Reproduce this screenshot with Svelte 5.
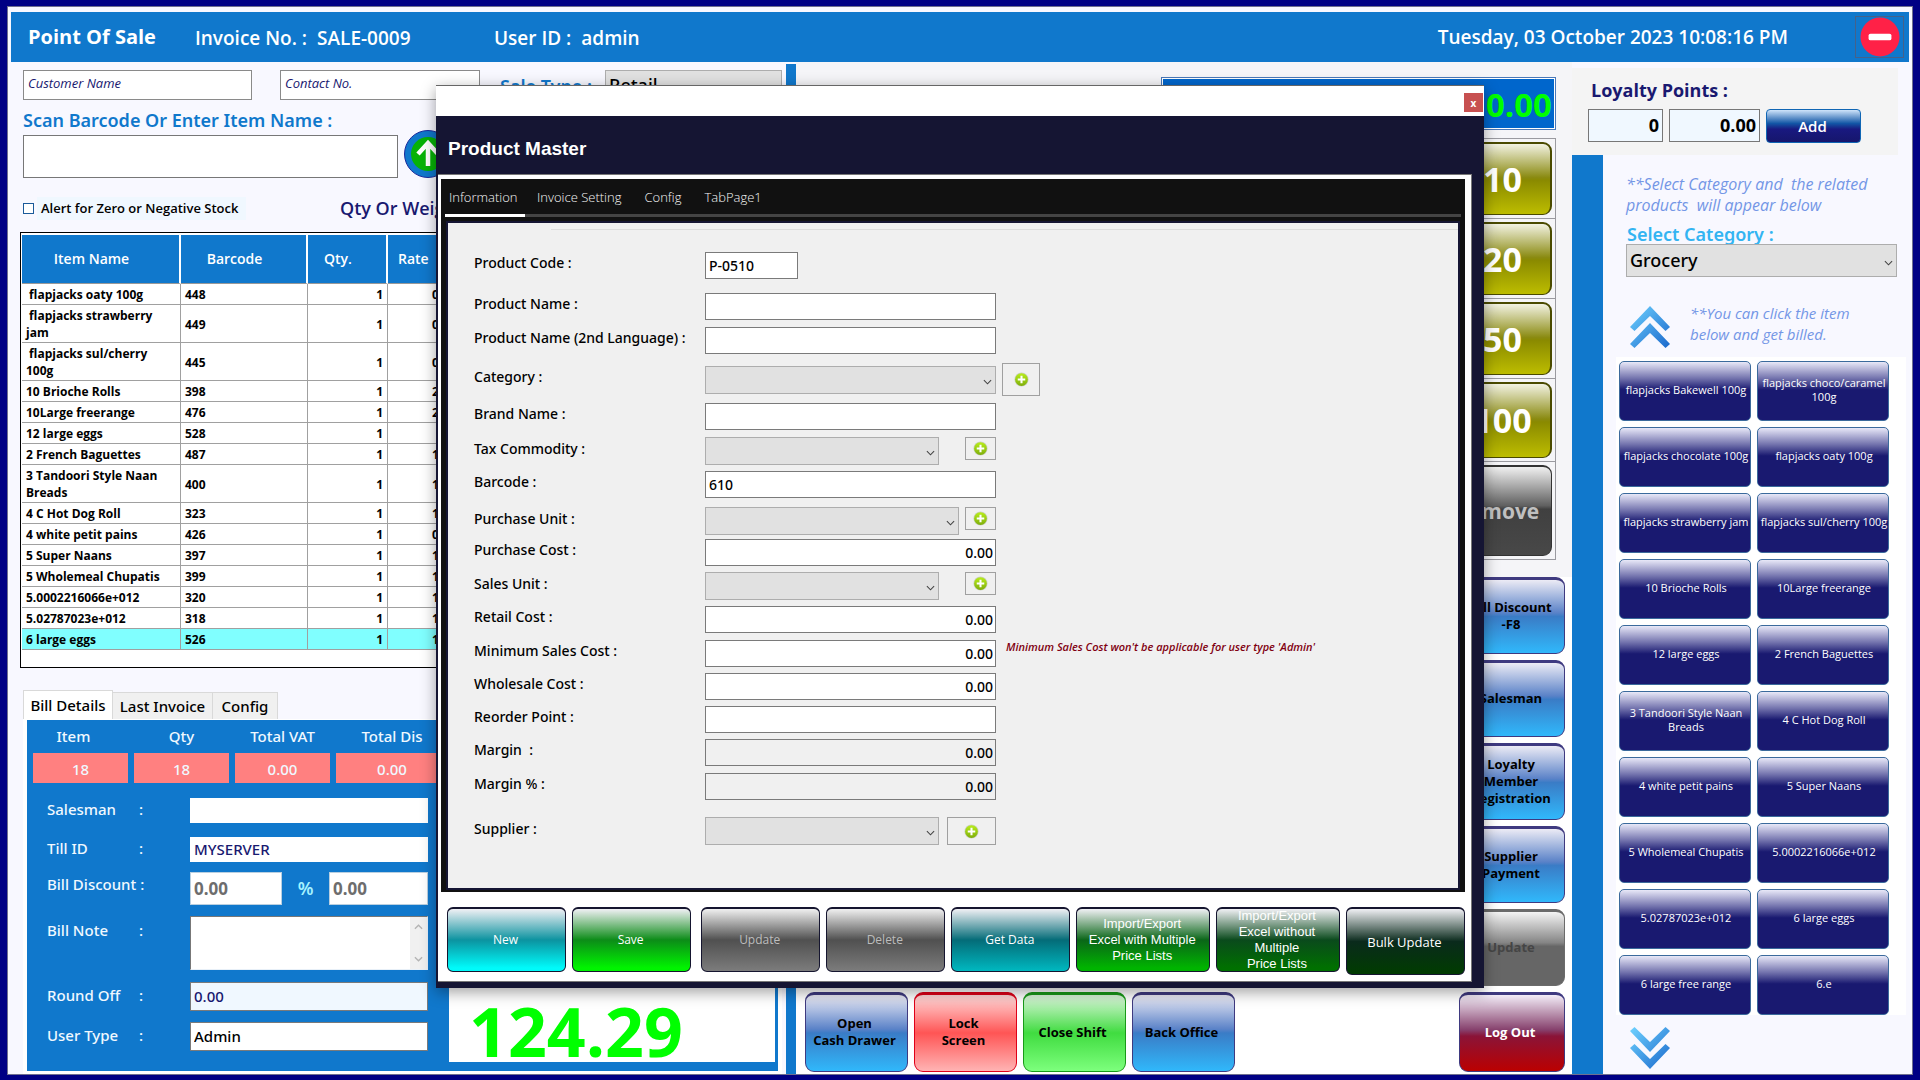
<script>
  const cart = [
    ['\u00a0flapjacks oaty 100g', '448', '1', '0.65'],
    ['\u00a0flapjacks strawberry jam', '449', '1', '0.65'],
    ['\u00a0flapjacks sul/cherry 100g', '445', '1', '0.65'],
    ['10 Brioche Rolls', '398', '1', '2.00'],
    ['10Large freerange', '476', '1', '2.00'],
    ['12 large eggs', '528', '1', ''],
    ['2 French Baguettes', '487', '1', '1.00'],
    ['3 Tandoori Style Naan Breads', '400', '1', '1.00'],
    ['4 C Hot Dog Roll', '323', '1', '1.00'],
    ['4 white petit pains', '426', '1', '0.99'],
    ['5 Super Naans', '397', '1', '1.00'],
    ['5 Wholemeal Chupatis', '399', '1', '1.00'],
    ['5.0002216066e+012', '320', '1', '1.00'],
    ['5.02787023e+012', '318', '1', '1.00'],
    ['6 large eggs', '526', '1', '1.00']
  ];

  const products = [
    'flapjacks Bakewell 100g', 'flapjacks choco/caramel 100g',
    'flapjacks chocolate 100g', 'flapjacks oaty 100g',
    'flapjacks strawberry jam', 'flapjacks sul/cherry 100g',
    '10 Brioche Rolls', '10Large freerange',
    '12 large eggs', '2 French Baguettes',
    '3 Tandoori Style Naan Breads', '4 C Hot Dog Roll',
    '4 white petit pains', '5 Super Naans',
    '5 Wholemeal Chupatis', '5.0002216066e+012',
    '5.02787023e+012', '6 large eggs',
    '6 large free range', '6.e'
  ];

  const totals = [['Item', '18'], ['Qty', '18'], ['Total VAT', '0.00'], ['Total Dis', '0.00']];

  const fields = [
    { id: 'code', label: 'Product Code :', value: 'P-0510', size: 'short' },
    { id: 'name', label: 'Product Name :', value: '', gap: 'group' },
    { id: 'name2', label: 'Product Name (2nd Language) :', value: '' },
    { id: 'category', label: 'Category :', select: 'full', gap: 'loose', outer: true },
    { id: 'brand', label: 'Brand Name :', value: '' },
    { id: 'tax', label: 'Tax Commodity :', select: 'narrow', add: 'small' },
    { id: 'barcode', label: 'Barcode :', value: '610', gap: 'snug' },
    { id: 'punit', label: 'Purchase Unit :', select: 'medium', add: 'small', gap: 'loose' },
    { id: 'pcost', label: 'Purchase Cost :', value: '0.00', num: true, gap: 'tight' },
    { id: 'sunit', label: 'Sales Unit :', select: 'narrow', add: 'small', gap: 'snug' },
    { id: 'retail', label: 'Retail Cost :', value: '0.00', num: true, gap: 'snug' },
    { id: 'minimum', label: 'Minimum Sales Cost :', value: '0.00', num: true, note: "Minimum Sales Cost won't be applicable for user type 'Admin'" },
    { id: 'wholesale', label: 'Wholesale Cost :', value: '0.00', num: true, gap: 'snug' },
    { id: 'reorder', label: 'Reorder Point :', value: '', gap: 'snug' },
    { id: 'margin', label: 'Margin \u00a0:', value: '0.00', num: true, locked: true, gap: 'snug' },
    { id: 'marginpct', label: 'Margin % :', value: '0.00', num: true, locked: true },
    { id: 'supplier', label: 'Supplier :', select: 'narrow', add: 'wide', gap: 'far' }
  ];
</script>

{#snippet arrow()}
  <svg class="arrow" viewBox="0 0 10 6" aria-hidden="true"><path d="M1 1l4 4 4-4" fill="none" stroke="#444" stroke-width="1.2" /></svg>
{/snippet}

{#snippet plus()}
  <svg class="plus" viewBox="0 0 16 16" aria-hidden="true">
    <circle cx="8" cy="8" r="7.5" fill="#c9cfc0" />
    <circle cx="8" cy="8" r="6.8" fill="url(#lime)" />
    <path d="M8 4v8M4 8h8" stroke="#fff" stroke-width="2.2" />
  </svg>
{/snippet}

<svg class="defs" aria-hidden="true">
  <defs>
    <linearGradient id="lime" x1="0" y1="0" x2="0" y2="1">
      <stop offset="0" stop-color="#b9ee1a" />
      <stop offset="1" stop-color="#7fae0c" />
    </linearGradient>
    <linearGradient id="sky" x1="0" y1="0" x2="1" y2="1">
      <stop offset="0" stop-color="#6fd2ff" />
      <stop offset="1" stop-color="#1a68cc" />
    </linearGradient>
  </defs>
</svg>

<div class="screen">
  <div class="shell">
    <header class="top">
      <h1>Point Of Sale</h1>
      <div class="pair invoice"><span>Invoice No. :</span><span>SALE-0009</span></div>
      <div class="pair"><span>User ID :</span><span>admin</span></div>
      <time>Tuesday, 03 October 2023 10:08:16 PM</time>
      <button class="exit" aria-label="Minimize">
        <svg viewBox="0 0 42 42"><circle cx="21" cy="21" r="20.5" fill="#ff2147" /><rect x="9" y="17.500" width="24" height="7" rx="2" fill="#fff" /></svg>
      </button>
    </header>

    <div class="work">
      <section class="sale">
        <div class="customer">
          <input class="cust" aria-label="Customer Name" placeholder="Customer Name" />
          <input class="contact" aria-label="Contact No." placeholder="Contact No." />
          <label class="blue" for="saletype">Sale Type :</label>
          <span class="pick saletype"><select id="saletype"><option>Retail</option></select>{@render arrow()}</span>
        </div>
        <label class="blue scanlabel" for="scan">Scan Barcode Or Enter Item Name :</label>
        <div class="scan">
          <input id="scan" />
          <button class="go" aria-label="Add item">
            <svg viewBox="0 0 48 48"><circle cx="24" cy="24" r="23.5" fill="#1078cc" stroke="#1b2a9c" /><circle cx="24" cy="24" r="17" fill="#06b206" /><path d="M24 36V14M14 24l10-11 10 11" fill="none" stroke="#fff" stroke-width="4.500" /></svg>
          </button>
        </div>
        <div class="alert">
          <input type="checkbox" id="zero" /><label for="zero">Alert for Zero or Negative Stock</label>
          <span class="weight">Qty Or Weight</span>
        </div>

        <div class="cart">
          <table>
            <colgroup><col class="c-name" /><col class="c-code" /><col class="c-qty" /><col class="c-rate" /><col /></colgroup>
            <thead><tr><th>Item Name</th><th>Barcode</th><th>Qty.</th><th class="lead">Rate</th><th></th></tr></thead>
            <tbody>
              {#each cart as row, i}
                <tr class:picked={i === cart.length - 1}>
                  <td>{row[0]}</td><td>{row[1]}</td><td class="num">{row[2]}</td><td class="num">{row[3]}</td><td></td>
                </tr>
              {/each}
            </tbody>
          </table>
        </div>

        <div class="billtabs" role="tablist">
          <button role="tab" class="on" aria-selected="true">Bill Details</button>
          <button role="tab" aria-selected="false">Last Invoice</button>
          <button role="tab" aria-selected="false">Config</button>
        </div>
        <div class="billframe">
          <div class="bill">
            <div class="totals">
              {#each totals as t}
                <div class="total"><span>{t[0]}</span><output>{t[1]}</output></div>
              {/each}
            </div>
            <div class="billbody">
              <div class="billform">
                <div class="brow"><label for="sman"><span>Salesman</span><span>:</span></label><input id="sman" class="plain" /></div>
                <div class="brow"><label for="till"><span>Till ID</span><span>:</span></label><input id="till" class="plain navy" value="MYSERVER" /></div>
                <div class="brow disc"><label for="bdisc"><span>Bill Discount :</span></label>
                  <div class="split"><input id="bdisc" class="grey" value="0.00" /><span class="pct">%</span><input class="grey" aria-label="Discount amount" value="0.00" /></div>
                </div>
                <div class="brow note"><label for="bnote"><span>Bill Note</span><span>:</span></label>
                  <div class="memo">
                    <textarea id="bnote"></textarea>
                    <div class="bar"><svg viewBox="0 0 10 6"><path d="M1 5l4-4 4 4" /></svg><svg viewBox="0 0 10 6"><path d="M1 1l4 4 4-4" /></svg></div>
                  </div>
                </div>
                <div class="brow"><label for="round"><span>Round Off</span><span>:</span></label><input id="round" class="boxed pale navy" value="0.00" /></div>
                <div class="brow"><label for="utype"><span>User Type</span><span>:</span></label><input id="utype" class="boxed" value="Admin" /></div>
              </div>
              <output class="grand">124.29</output>
            </div>
          </div>
        </div>
      </section>

      <div class="divider"></div>

      <section class="pay">
        <div class="payside">
          <output class="amount">0.00</output>
          <div class="notes">
            <div><button class="olive">10</button></div>
            <div><button class="olive">20</button></div>
            <div><button class="olive">50</button></div>
            <div><button class="olive">100</button></div>
            <div class="tall"><button class="remove">Remove</button></div>
          </div>
          <div class="actions">
            <button class="gloss azure">Bill Discount<br />-F8</button>
            <button class="gloss azure">Salesman</button>
            <button class="gloss azure">Loyalty<br />Member<br />Registration</button>
            <button class="gloss azure">Supplier<br />Payment</button>
            <button class="gloss off">Update</button>
          </div>
        </div>
        <div class="bottom">
          <button class="gloss azure">Open<br />Cash Drawer</button>
          <button class="gloss red">Lock<br />Screen</button>
          <button class="gloss green">Close Shift</button>
          <button class="gloss azure">Back Office</button>
          <button class="gloss wine">Log Out</button>
        </div>
      </section>

      <section class="right">
        <div class="loyalty">
          <label for="points">Loyalty Points :</label>
          <div class="lrow">
            <input id="points" class="p1" value="0" />
            <input class="p2" aria-label="Points value" value="0.00" />
            <button>Add</button>
          </div>
        </div>
        <div class="lower">
          <div class="rail"></div>
          <div class="catalog">
            <p class="hint lead">**Select Category and&nbsp; the related<br />products&nbsp; will appear below</p>
            <label class="catlabel" for="cat">Select Category :</label>
            <span class="pick cat"><select id="cat"><option>Grocery</option></select>{@render arrow()}</span>
            <div class="more">
              <button class="chev" aria-label="Scroll up"><svg viewBox="0 0 40 42"><path fill="url(#sky)" d="M20 0L40 21L35.500 25L20 10L4.500 25L0 21ZM20 17L40 38L35.500 42L20 27L4.500 42L0 38Z" /></svg></button>
              <p class="hint">**You can click the item<br />below and get billed.</p>
            </div>
            <div class="items">
              {#each products as p}<button>{p}</button>{/each}
            </div>
            <button class="chev down" aria-label="Scroll down"><svg viewBox="0 0 40 42"><path fill="url(#sky)" d="M20 25L40 4L35.500 0L20 15L4.500 0L0 4ZM20 42L40 21L35.500 17L20 32L4.500 17L0 21Z" /></svg></button>
          </div>
        </div>
      </section>
    </div>
  </div>

  <div class="dialog" role="dialog" aria-label="Product Master">
    <div class="caption"><button aria-label="Close">x</button></div>
    <h2>Product Master</h2>
    <div class="inner">
      <div class="tabs">
        <div class="strip" role="tablist">
          <button role="tab" class="on" aria-selected="true">Information</button>
          <button role="tab" aria-selected="false">Invoice Setting</button>
          <button role="tab" aria-selected="false">Config</button>
          <button role="tab" aria-selected="false">TabPage1</button>
        </div>
        <form class="panel" onsubmit={(e) => e.preventDefault()}>
          <hr />
          {#each fields as f}
            <div class="row {f.gap ?? ''}">
              <label for={f.id}>{f.label}</label>
              <div class="field">
                {#if f.select}
                  <span class="pick {f.select}"><select id={f.id}><option></option></select>{@render arrow()}</span>
                {:else}
                  <input id={f.id} class={f.size ?? ''} class:num={f.num} readonly={f.locked} value={f.value} />
                {/if}
                {#if f.add}<button type="button" class="add {f.add}" aria-label="Add">{@render plus()}</button>{/if}
              </div>
              {#if f.outer}<button type="button" class="add big" aria-label="Add category">{@render plus()}</button>{/if}
              {#if f.note}<em>{f.note}</em>{/if}
            </div>
          {/each}
        </form>
      </div>
      <div class="commands">
        <button class="cyan">New</button>
        <button class="lime">Save</button>
        <button class="dim first" disabled>Update</button>
        <button class="dim" disabled>Delete</button>
        <button class="teal">Get Data</button>
        <button class="forest sans wide">Import/Export<br />Excel with Multiple<br />Price Lists</button>
        <button class="deep sans">Import/Export<br />Excel without<br />Multiple<br />Price Lists</button>
        <button class="dark">Bulk Update</button>
      </div>
    </div>
  </div>
</div>

<style>
  :global(body) { margin: 0; background: #000084; }
  * { box-sizing: border-box; }
  .defs { position: absolute; width: 0; height: 0; }
  .screen { position: relative; min-height: 100vh; display: flex; flex-direction: column; padding: 6px 7px 5px; background: #000084; font: 14px/1.2 "Open Sans", "Noto Sans", sans-serif; color: #000; }
  .shell { flex: 1; display: flex; flex-direction: column; border: 1px solid #6f6f8f; background: #f8f8ff; padding: 5px 3px 0 3px; }
  button, input, select, textarea { font: inherit; color: inherit; margin: 0; }
  button { cursor: pointer; padding: 0; border: 0; background: none; }
  h1, h2, p { margin: 0; }

  .top { display: flex; align-items: center; height: 50px; background: #1078cc; color: #fff; font-size: 19px; font-weight: 600; padding: 0 5px 0 17px; }
  .top h1 { font-size: 20px; font-weight: 700; width: 167px; }
  .pair { display: flex; gap: 10px; padding-top: 2px; }
  .invoice { width: 299px; }
  .top time { margin-left: auto; }
  .exit { display: flex; justify-content: center; width: 49px; height: 42px; margin-left: 67px; border: 1px solid #45618a; }
  .exit svg { width: 40px; height: 40px; }

  .work { flex: 1; display: grid; grid-template-columns: minmax(0, 775fr) 10px minmax(0, 776fr) minmax(0, 337fr); }
  .divider { background: #1078cc; margin-top: 2px; }

  .sale { display: flex; flex-direction: column; padding-top: 8px; }
  .customer { display: flex; align-items: flex-start; padding-left: 12px; height: 38px; }
  .customer input { border: 1px solid #8a8a8a; background: #fff; height: 30px; padding: 0 4px 4px; font-size: 13px; font-style: italic; }
  .customer input::placeholder { color: #191970; opacity: 1; }
  .cust { width: 229px; }
  .contact { width: 200px; margin-left: 28px; }
  .blue { color: #1078cc; font-family: "Noto Sans", "Open Sans", sans-serif; font-size: 18px; font-weight: 600; line-height: 24px; }
  .customer .blue { margin: 4px 13px 0 20px; white-space: nowrap; width: 92px; }
  .scanlabel { padding-left: 12px; }
  .scan { display: flex; align-items: flex-end; gap: 6px; padding-left: 12px; height: 46px; }
  .scan input { width: 375px; height: 43px; border: 1px solid #777; background: #fff; }
  .go { display: flex; width: 48px; height: 48px; }
  .go svg { width: 48px; }
  .alert { display: flex; align-items: center; height: 54px; padding: 7px 0 0 12px; }
  .alert input { appearance: none; width: 11px; height: 11px; border: 1px solid #1b5a9a; background: #fff; }
  .alert label { font-size: 13px; font-weight: 600; padding: 4px 9px 3px 4px; margin-left: 3px; background: #f0f8ff; width: 209px; white-space: nowrap; }
  .weight { margin-left: 94px; font-size: 18px; font-weight: 600; color: #191970; }

  .pick { position: relative; display: block; }
  .pick select { appearance: none; display: block; width: 100%; height: 28px; border: 1px solid #adadad; border-radius: 0; background: #e1e1e1; padding: 0 3px; font-family: "Noto Sans", "Open Sans", sans-serif; }
  .arrow { position: absolute; right: 4px; top: 50%; margin-top: -1px; width: 9px; height: 6px; pointer-events: none; }
  .saletype { width: 177px; }
  .saletype select { height: 32px; font-size: 18px; font-weight: 500; }

  .cart { margin: 0 12px 0 9px; min-height: 436px; flex: 1; border: 1px solid #000; background: #fff; padding: 2px 0 0 1px; overflow: hidden; }
  table { width: 100%; border-collapse: separate; border-spacing: 0; table-layout: fixed; font-size: 12px; font-weight: 700; }
  .c-name { width: 159px; }
  .c-code { width: 127px; }
  .c-qty { width: 80px; }
  .c-rate { width: 73px; }
  th { height: 49px; background: #1078cc; color: #fff; font-size: 14px; font-weight: 600; padding: 0 18px 0 0; border-right: 2px solid #fff; }
  th.lead { text-align: left; padding-left: 10px; }
  thead th { border-bottom: 1px solid #999; }
  td { padding: 2px 4px 1px 4px; line-height: 17px; border-right: 1px solid #a0a0a0; border-bottom: 1px solid #a0a0a0; overflow: hidden; }
  td:first-child { padding-right: 8px; }
  .num { text-align: right; }
  .picked td { background: #80ffff; }

  .billtabs { display: flex; align-items: flex-end; margin-top: 22px; padding-left: 12px; font-family: "Noto Sans", "Open Sans", sans-serif; }
  .billtabs button { height: 27px; padding: 0 4px 0 4px; font-size: 15px; font-weight: 500; border: 1px solid #d9d9d9; border-bottom: 0; border-left: 0; background: #f0f0f0; width: 100px; white-space: nowrap; }
  .billtabs button:last-child { width: 65px; }
  .billtabs .on { height: 29px; width: 90px; padding: 0; background: #fff; border-left: 1px solid #d9d9d9; }
  .billframe { margin: 0 4px 0 12px; background: #fff; padding: 1px 4px 3px 4px; }
  .bill { background: #1078cc; color: #f0f8ff; padding: 7px 3px 9px 6px; font-family: "Noto Sans", "Open Sans", sans-serif; font-size: 15px; font-weight: 500; }
  .totals { display: flex; gap: 6px; }
  .total { width: 95px; text-align: center; display: flex; flex-direction: column; }
  .total:last-child { width: 112px; }
  .total span { height: 26px; line-height: 18px; }
  .total:first-child span { padding-right: 14px; }
  .total output { height: 30px; line-height: 33px; background: #ff8080; font-size: 15px; }
  .billbody { display: flex; justify-content: space-between; align-items: flex-end; }
  .billform { width: 396px; padding: 15px 0 11px 14px; display: flex; flex-direction: column; }
  .brow { display: grid; grid-template-columns: 143px 238px; align-items: center; margin-bottom: 11px; }
  .brow label { display: grid; grid-template-columns: 92px auto; line-height: 20px; padding-bottom: 4px; white-space: nowrap; }
  .brow input { min-width: 0; }
  .plain { height: 25px; border: 0; background: #fff; padding: 0 4px 2px; color: #000; }
  .brow:first-child { margin-bottom: 14px; }
  .brow:nth-child(2) { margin-bottom: 10px; }
  .brow.note { margin-bottom: 12px; }
  .navy { color: #191970; }
  .disc, .note { align-items: start; }
  .split { display: flex; justify-content: space-between; align-items: center; }
  .grey { height: 33px; width: 92px; border: 1px solid #b9cfe0; background: #fff; padding: 0 3px; color: #6d6d6d; font-size: 17px; font-weight: 700; }
  .grey:last-child { width: 99px; }
  .pct { color: #a5f3ff; font-size: 18px; font-weight: 600; }
  .brow.disc label { padding-top: 2px; }
  .brow.note label { padding-top: 4px; }
  .memo { display: flex; height: 54px; border: 1px solid #e8f0f8; border-top: 1px solid #777; border-left: 1px solid #777; background: #fff; }
  .memo textarea { flex: 1; min-width: 0; border: 0; resize: none; outline: 0; overflow: hidden; }
  .bar { display: flex; flex-direction: column; justify-content: space-between; align-items: center; width: 17px; padding: 7px 0; background: #f0f0f0; }
  .bar svg { width: 9px; height: 6px; }
  .bar path { fill: none; stroke: #b4b4b4; stroke-width: 1.5; }
  .boxed { height: 29px; border: 1px solid #7a7a7a; background: #fff; padding: 0 3px 2px; color: #000; }
  .boxed.pale { background: #f0f8ff; color: #191970; }
  .brow:last-child { margin-bottom: 0; }
  .grand { width: 326px; height: 120px; background: #fff; color: #0f0; font-family: "Open Sans", "Noto Sans", sans-serif; font-size: 68px; font-weight: 700; line-height: 60px; padding: 59px 0 0 20px; }

  .pay { display: flex; flex-direction: column; background: #fff; }
  .payside { display: flex; flex-direction: column; align-items: flex-end; background: #f5f5f8; padding-top: 15px; }
  .amount { width: 395px; height: 53px; margin-right: 16px; border: 1px solid #4a78b8; box-shadow: inset 0 0 0 1px #fff; background: #0066cc; color: #0f0; font-size: 33px; font-weight: 700; line-height: 53px; text-align: right; padding-right: 3px; }
  .notes { width: 106px; margin: 8px 16px 0 0; border: 1px solid #9a9aa0; border-bottom: 0; }
  .notes div { height: 80px; padding: 3px; border-bottom: 1px solid #9a9aa0; }
  .notes div:nth-child(4) { height: 83px; }
  .notes .tall { height: 98px; }
  .notes button { width: 100%; height: 100%; border-radius: 9px; color: #fff; font-weight: 700; font-size: 34px; }
  .olive { border: 1px solid #4a4a00; border-top-width: 2px; border-right-width: 2px; background: linear-gradient(#f2f2e2 0, #8a8a10 48%, #8a8a00 52%, #bdbd00 100%); }
  .notes .remove { border: 1px solid #333; border-top-width: 2px; background: linear-gradient(#f0f0f0 0, #606060 44%, #404040 48%, #484848 100%); color: #c0c0c0; font-size: 21px; padding: 2px 20px 0 0; }
  .actions { display: flex; flex-direction: column; gap: 6px; width: 100%; align-items: flex-end; background: #fff; padding-right: 7px; margin-top: 17px; }
  .gloss { width: 106px; height: 77px; border-radius: 9px; border: 1px solid; border-top-width: 3px; font-size: 13px; font-weight: 700; line-height: 17px; padding: 0 2px 2px 0; }
  .azure { border-color: #3f3a80; background: linear-gradient(#ecebf5 0, #5a82c8 45%, #3a7cc6 50%, #30b8fb 100%); }
  .red { border-color: #e00018; background: linear-gradient(#ffd9d9 0, #ff5555 50%, #ffb4b4 100%); }
  .green { border-color: #189a18; background: linear-gradient(#dcf5dc 0, #40dc40 50%, #7dff7d 100%); }
  .wine { border-color: #3f3a80; background: linear-gradient(#f3edf8 0, #86406c 46%, #8a1438 54%, #bb0000 100%); color: #fff; }
  .off { border-color: #6b6b6b; background: linear-gradient(#f4f4f4 0, #858585 42%, #666 47%, #666 100%); color: #454545; }
  .bottom { display: flex; gap: 6px; margin-top: auto; padding: 6px 7px 2px 9px; }
  .bottom .gloss { width: 103px; height: 80px; padding-right: 4px; }
  .bottom .wine { margin-left: auto; width: 106px; }

  .right { display: flex; flex-direction: column; }
  .loyalty { margin: 6px 11px 0 0; height: 87px; padding: 10px 0 0 16px; background: #f4f4f4; }
  .loyalty label { font-size: 18px; font-weight: 700; color: #191970; padding-left: 3px; line-height: 24px; display: block; }
  .lrow { display: flex; gap: 6px; margin-top: 7px; }
  .lrow input { height: 33px; border: 1px solid #777; background: #f0f8ff; padding: 0 3px 2px; text-align: right; font-size: 18px; font-weight: 700; min-width: 0; }
  .p1 { width: 75px; }
  .p2 { width: 91px; }
  .lrow button { width: 95px; height: 34px; border: 1px solid #1066b4; border-radius: 4px; color: #fff; font-size: 15px; font-weight: 600; padding-right: 2px; background: linear-gradient(#cfe4fa 0, #1256a6 42%, #191980 60%, #16166c 100%); }
  .lower { flex: 1; display: flex; }
  .rail { width: 31px; background: #1078cc; }
  .catalog { flex: 1; display: flex; flex-direction: column; padding-top: 19px; }
  .hint { color: #7396e6; font-size: 15px; font-style: italic; font-weight: 500; line-height: 21px; white-space: nowrap; }
  .hint.lead { padding-left: 23px; font-size: 16px; }
  .catlabel { color: #33b4f2; font-family: "Noto Sans", "Open Sans", sans-serif; font-size: 18px; font-weight: 600; line-height: 20px; padding: 8px 0 0 24px; }
  .cat { margin: 0 12px 0 23px; }
  .cat select { height: 33px; font-size: 18px; font-weight: 500; }
  .more { display: flex; align-items: flex-start; gap: 20px; padding: 26px 0 9px 27px; }
  .chev { display: flex; width: 40px; height: 42px; flex: none; }
  .more .chev { margin-top: 3px; }
  .items { display: grid; grid-template-columns: 1fr 1fr; gap: 6px; background: #fff; padding: 4px 17px 0 3px; margin: 0 3px 0 13px; }
  .items button { height: 60px; border: 1px solid #3b6a9c; border-radius: 5px; color: #fff; font-size: 11px; line-height: 14px; padding: 0 0 2px 2px; background: linear-gradient(#e8e8f8 0, #7474ae 28%, #191970 48%, #191970 100%); }
  .down { margin: 12px 0 5px 27px; }

  .dialog { position: absolute; top: 85px; left: 436px; right: 436px; background: #151533; border-top: 1px solid #666; box-shadow: 0 4px 14px rgba(0, 0, 0, .38); }
  .caption { display: flex; justify-content: flex-end; align-items: flex-end; height: 30px; background: #fff; padding: 0 1px 4px; }
  .caption button { width: 19px; height: 19px; background: #c75050; color: #fff; font-size: 10px; font-weight: 700; line-height: 16px; }
  h2 { height: 58px; padding-left: 12px; color: #fff; font: 700 19px/65px "Liberation Sans", Arial, sans-serif; }
  .inner { margin: 0 12px 6px 2px; background: #fff; padding: 4px 6px 6px 3px; border-top: 1px solid #777; border-right: 1px solid #777; border-bottom: 1px solid #777; }
  .tabs { background: #111; padding: 0 7px 4px; }
  .strip { display: flex; margin: 0 -3px; height: 38px; border-bottom: 3px solid #444; color: #f5f5f5; }
  .strip button { height: 38px; padding: 2px 4px 0; margin-right: 15px; font-size: 13px; font-weight: 300; border-bottom: 3px solid transparent; white-space: nowrap; }
  .strip button:first-child { width: 80px; margin-right: 8px; padding-right: 8px; }
  .strip .on { border-bottom-color: #fff; }
  .panel { margin-top: 6px; background: #f0f0f0; padding: 6px 0 43px; border: 0; outline: 2px solid #151533; }
  hr { margin: 0 0 22px 103px; border: 0; height: 1px; background: #dcdcdc; }
  .row { display: flex; align-items: center; margin: 7px 0 0 26px; }
  .row.tight { margin-top: 4px; }
  .row.snug { margin-top: 6px; }
  .row.loose { margin-top: 9px; }
  .row.group { margin-top: 14px; }
  .row.far { margin-top: 17px; }
  hr + .row { margin-top: 0; }
  .row label { width: 231px; flex: none; font-family: "Noto Sans", "Open Sans", sans-serif; font-size: 14px; font-weight: 500; line-height: 22px; height: 27px; white-space: pre; }
  .field { display: flex; align-items: flex-start; justify-content: space-between; width: 291px; flex: none; }
  .field input { width: 100%; height: 27px; border: 1px solid #7a7a7a; background: #fff; padding: 0 3px; font-family: "Noto Sans", "Open Sans", sans-serif; font-size: 14px; font-weight: 500; }
  .field input.short { width: 93px; }
  .field input[readonly] { background: #f0f0f0; }
  .field .num { text-align: right; padding-right: 2px; }
  .full { width: 291px; }
  .narrow { width: 234px; }
  .medium { width: 254px; }
  .add { display: flex; align-items: center; justify-content: center; border: 1px solid #a0a0a0; background: #f0f0f0; }
  .add.small { width: 31px; height: 23px; }
  .add.wide { width: 49px; height: 28px; }
  .add.big { width: 38px; height: 33px; margin-left: 6px; }
  .plus { width: 15px; height: 15px; }
  .row em { margin: 0 0 14px 10px; color: #800010; font-size: 11px; font-weight: 600; white-space: nowrap; }

  .commands { display: flex; align-items: flex-start; gap: 6px; padding: 15px 0 0 6px; }
  .commands button { flex: 119 1 0; height: 65px; border: 1px solid #15152f; border-top-width: 2px; border-radius: 6px; color: #fff; font-size: 12px; font-weight: 500; line-height: 16px; white-space: nowrap; display: flex; align-items: center; justify-content: center; padding-right: 2px; }
  .commands .first { margin-left: 4px; }
  .commands .wide { flex-grow: 134; }
  .commands .deep { flex-grow: 124; }
  .commands .sans { font: 13px/16px "Liberation Sans", Arial, sans-serif; }
  .commands .cyan { background: linear-gradient(#f0f0f4 0, #0c93a0 50%, #00fafa 95%); }
  .commands .lime { background: linear-gradient(#f0f0f4 0, #0c8c18 50%, #00f400 95%); }
  .commands .dim { background: linear-gradient(#f0f0f0 0, #505050 50%, #7c7c7c 100%); color: #bdbdbd; }
  .commands .teal { background: linear-gradient(#f0f0f4 0, #046c78 50%, #00b8c0 100%); }
  .commands .forest { background: linear-gradient(#f0f0f4 0, #0a6618 50%, #00b400 95%); }
  .commands .deep { background: linear-gradient(#f0f0f4 0, #0a4a1c 50%, #007000 95%); }
  .commands .dark { height: 68px; font-size: 13px; background: linear-gradient(#f0f0f4 0, #0a2a1c 50%, #003c00 100%); }
</style>
